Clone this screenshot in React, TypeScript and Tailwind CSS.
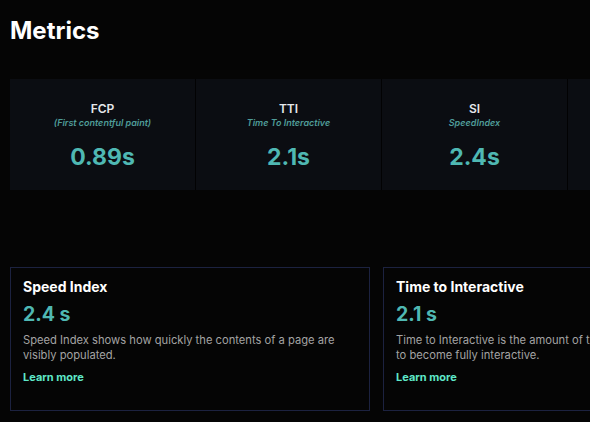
const metrics = [
  { key: "FCP", sub: "(First contentful paint)", value: "0.89s" },
  { key: "TTI", sub: "Time To Interactive", value: "2.1s" },
  { key: "SI", sub: "SpeedIndex", value: "2.4s" },
  { key: "TBT", sub: "Total Blocking", value: "120ms" },
];

const cards = [
  {
    title: "Speed Index",
    value: "2.4 s",
    text: "Speed Index shows how quickly the contents of a page are visibly populated.",
  },
  {
    title: "Time to Interactive",
    value: "2.1 s",
    text: "Time to Interactive is the amount of time it takes for the page to become fully interactive.",
  },
];

export default function App() {
  return (
    <div className="w-[590px] h-[422px] overflow-hidden bg-[#050505] font-['Inter',sans-serif]">
      <h1 className="pl-[10px] pt-[15px] text-[24px] leading-[32px] font-bold text-white">Metrics</h1>

      <div className="mt-[32px] ml-[10px] flex w-max gap-px bg-[#020203] h-[111px]">
        {metrics.map((m) => (
          <div key={m.key} className="w-[185px] shrink-0 bg-[#0b0d12] flex flex-col items-center pt-[22px]">
            <div className="text-[12px] leading-[16px] font-semibold text-[#e5e7eb]">{m.key}</div>
            <div className="text-[9px] leading-[12px] italic font-semibold text-[#4f9c98]">{m.sub}</div>
            <div className="mt-[14px] text-[23px] leading-[28px] font-bold text-[#4fb8b3]">{m.value}</div>
          </div>
        ))}
      </div>

      <div className="mt-[77px] ml-[10px] flex gap-[13px] w-max">
        {cards.map((c) => (
          <div key={c.title} className="w-[360px] h-[144px] shrink-0 border border-[#1c2240] pl-[12px] pr-[10px] pt-[9px]">
            <h2 className="text-[14px] leading-[20px] font-bold text-white">{c.title}</h2>
            <div className="mt-[5px] text-[19.5px] leading-[24px] font-bold text-[#4fb8b3]">{c.value}</div>
            <p className="mt-[7px] text-[11.2px] leading-[15px] text-[#a3a3a3] w-[330px]">{c.text}</p>
            <a className="block mt-[6px] text-[11px] leading-[16px] font-bold text-[#5ee8c8]" href="#">Learn more</a>
          </div>
        ))}
      </div>
    </div>
  );
}
